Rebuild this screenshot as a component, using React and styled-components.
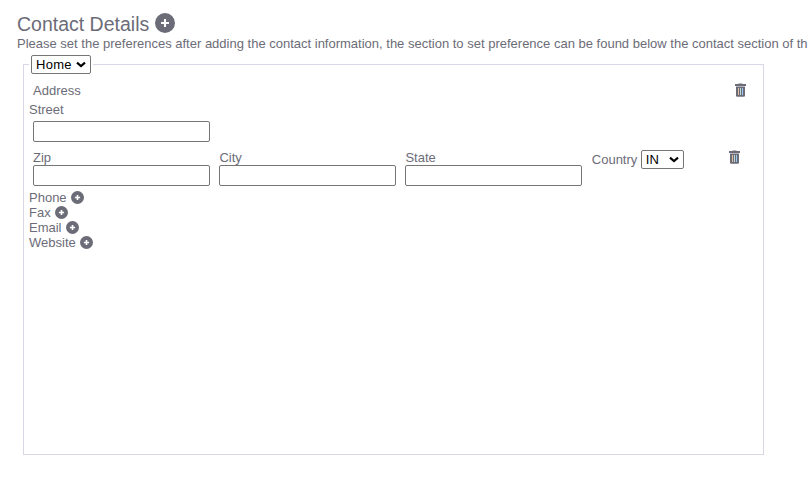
import React from "react";
import styled, { createGlobalStyle } from "styled-components";

const GlobalStyle = createGlobalStyle`
  *, *::before, *::after { box-sizing: border-box; }
  body {
    margin: 0;
    background: #fff;
    color: #6c6c78;
    font: 13px/15px "Liberation Sans", Arial, sans-serif;
    overflow: hidden;
  }
`;

const Page = styled.main`
  padding: 12px 0 0 17px;
`;

const Title = styled.h1`
  display: flex;
  align-items: flex-start;
  gap: 6px;
  height: 24px;
  margin: 0;
  font-size: 19.5px;
  font-weight: 400;
  line-height: 24px;
`;

const Hint = styled.p`
  margin: 0;
  height: 16px;
  white-space: nowrap;
`;

const Fieldset = styled.fieldset`
  width: 741px;
  height: 400px;
  margin: 3px 0 0 6px;
  padding: 0 5px;
  border: 1px solid #d8d7e6;
`;

const Legend = styled.legend`
  display: flex;
  padding: 0 2px;
`;

const SelectBox = styled.span`
  display: grid;
  align-items: center;
  width: ${(p) => p.$width}px;
  height: 19px;
  > * { grid-area: 1 / 1; }
  > svg {
    justify-self: end;
    margin-right: 5px;
    pointer-events: none;
  }
`;

const NativeSelect = styled.select`
  appearance: none;
  width: 100%;
  height: 19px;
  margin: 0;
  padding: 0 0 0 4px;
  border: 1px solid #767676;
  border-radius: 2px;
  background: #fff;
  color: #000;
  font: 13px "Liberation Sans", Arial, sans-serif;
  letter-spacing: ${(p) => p.$spacing}px;
`;

const Select = ({ width, spacing = 0, label, value }) => (
  <SelectBox $width={width}>
    <NativeSelect $spacing={spacing} aria-label={label}>
      <option>{value}</option>
    </NativeSelect>
    <svg width="10" height="7" viewBox="0 0 10 7">
      <path d="M1 1.6l4 3.5 4-3.5" fill="none" stroke="#000" strokeWidth="2.1" />
    </svg>
  </SelectBox>
);

const AddressHeader = styled.div`
  display: flex;
  justify-content: space-between;
  height: 19px;
  margin-top: 9px;
  padding: 0 12px 0 4px;
`;

const Street = styled.div`
  height: 19px;
`;

const Input = styled.input`
  display: block;
  width: 177px;
  height: 21px;
  margin: 0;
  padding: 1px 2px;
  border: 1px solid #767676;
  border-radius: 2px;
  background: #fff;
  font: inherit;
`;

const StreetField = styled.div`
  padding-left: 4px;
  height: 29px;
`;

const Columns = styled.div`
  display: grid;
  grid-template-columns: 186.4px 186px 186.4px 1fr auto;
  height: 40px;
  padding: 0 18px 0 4px;
`;

const Field = styled.label`
  display: block;
`;

const Country = styled.label`
  display: flex;
  align-items: flex-start;
  gap: 3.5px;
  line-height: 19px;
`;

const List = styled.ul`
  margin: 0;
  padding: 0;
  list-style: none;
`;

const Item = styled.li`
  display: flex;
  align-items: flex-start;
  gap: 4px;
  height: 15px;
`;

const IconButton = styled.button`
  display: flex;
  flex: none;
  align-self: flex-start;
  margin: ${(p) => p.$top || 0}px 0 0;
  padding: 0;
  border: 0;
  background: none;
  color: inherit;
`;

const PlusCircle = ({ size, label }) => (
  <IconButton aria-label={label} $top={size > 15 ? 1.4 : 0.6}>
    <svg width={size} height={size} viewBox="0 0 20 20">
      <circle cx="10" cy="10" r="10" fill="currentColor" />
      <path d="M10 6v8M6 10h8" stroke="#fff" strokeWidth={size > 15 ? 2.1 : 2.5} />
    </svg>
  </IconButton>
);

const Trash = ({ label }) => (
  <IconButton aria-label={label}>
    <svg width="11" height="14" viewBox="0 0 11 14">
      <path d="M3.5 0.4h4V1h3.5v2H0V1h3.5z" fill="currentColor" />
      <path d="M1 3.6h9v9q0 1.2-1.2 1.2H2.2Q1 13.8 1 12.6z" fill="currentColor" />
      <path d="M3.5 5v7" stroke="#e2bd9e" />
      <path d="M5.5 5v7" stroke="#b9dcdc" />
      <path d="M7.500 5v7" stroke="#9bc8ee" />
    </svg>
  </IconButton>
);

export default function App() {
  return (
    <>
      <GlobalStyle />
      <Page>
        <Title>
          Contact Details
          <PlusCircle size={20} label="Add contact" />
        </Title>
        <Hint>
          Please set the preferences after adding the contact information, the section to set
          preference can be found below the contact section of th
        </Hint>
        <Fieldset>
          <Legend>
            <Select width={60} spacing={0.3} label="Contact type" value="Home" />
          </Legend>
          <AddressHeader>
            Address
            <Trash label="Remove contact" />
          </AddressHeader>
          <Street>Street</Street>
          <StreetField>
            <Input aria-label="Street" />
          </StreetField>
          <Columns>
            {["Zip", "City", "State"].map((name) => (
              <Field key={name}>
                {name}
                <Input />
              </Field>
            ))}
            <Country>
              Country
              <Select width={43} value="IN" />
            </Country>
            <Trash label="Remove address" />
          </Columns>
          <List>
            {["Phone", "Fax", "Email", "Website"].map((name) => (
              <Item key={name}>
                {name}
                <PlusCircle size={13} label={`Add ${name}`} />
              </Item>
            ))}
          </List>
        </Fieldset>
      </Page>
    </>
  );
}
